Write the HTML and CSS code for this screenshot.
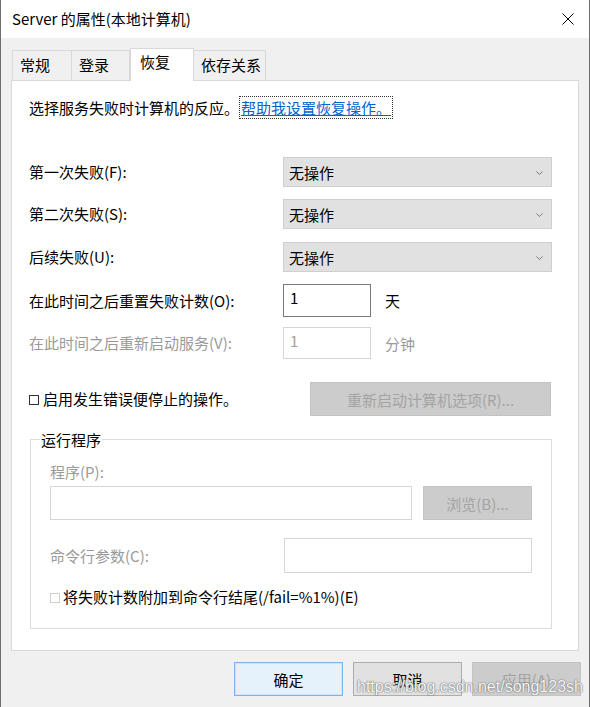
FILE: index.html
```html
<!DOCTYPE html>
<html lang="zh-CN">
<head>
<meta charset="utf-8">
<title>Server 的属性(本地计算机)</title>
<link rel="stylesheet" href="styles.css">
</head>
<body>
<div class="window">
  <div class="titlebar">
    <span class="title">Server 的属性(本地计算机)</span>
    <svg class="close" width="12" height="12" viewBox="0 0 12 12"><path d="M0.5 0.5 L11.5 11.5 M11.5 0.5 L0.5 11.5" stroke="#000" stroke-width="1" fill="none"/></svg>
  </div>
  <div class="client">
    <div class="tabs">
      <div class="tab t1">常规</div>
      <div class="tab t2">登录</div>
      <div class="tab active t3">恢复</div>
      <div class="tab t4">依存关系</div>
    </div>
    <div class="panel">
      <div class="intro">选择服务失败时计算机的反应。<a class="link">帮助我设置恢复操作。</a></div>

      <div class="row r1">
        <span class="label">第一次失败(F):</span>
        <div class="select"><span>无操作</span><svg class="chev" width="7" height="4" viewBox="0 0 7 4"><path d="M0.5 0.5 L3.5 3.5 L6.5 0.5" stroke="#777" stroke-width="1" fill="none"/></svg></div>
      </div>
      <div class="row r2">
        <span class="label">第二次失败(S):</span>
        <div class="select"><span>无操作</span><svg class="chev" width="7" height="4" viewBox="0 0 7 4"><path d="M0.5 0.5 L3.5 3.5 L6.5 0.5" stroke="#777" stroke-width="1" fill="none"/></svg></div>
      </div>
      <div class="row r3">
        <span class="label">后续失败(U):</span>
        <div class="select"><span>无操作</span><svg class="chev" width="7" height="4" viewBox="0 0 7 4"><path d="M0.5 0.5 L3.5 3.5 L6.5 0.5" stroke="#777" stroke-width="1" fill="none"/></svg></div>
      </div>
      <div class="row r4">
        <span class="label">在此时间之后重置失败计数(O):</span>
        <div class="num">1</div>
        <span class="unit">天</span>
      </div>
      <div class="row r5 disabled">
        <span class="label">在此时间之后重新启动服务(V):</span>
        <div class="num off">1</div>
        <span class="unit">分钟</span>
      </div>

      <div class="row r6">
        <span class="check"><span class="box"></span>启用发生错误便停止的操作。</span>
        <div class="btn dis wide">重新启动计算机选项(R)...</div>
      </div>

      <div class="group">
        <div class="legend">运行程序</div>
        <div class="glabel">程序(P):</div>
        <div class="prow">
          <div class="field prog"></div>
          <div class="btn dis browse">浏览(B)...</div>
        </div>
        <div class="crow">
          <span class="glabel2">命令行参数(C):</span>
          <div class="field args"></div>
        </div>
        <div class="gcheck"><span class="box off"></span>将失败计数附加到命令行结尾(/fail=%1%)(E)</div>
      </div>
    </div>
    <div class="buttons">
      <div class="btn ok">确定</div>
      <div class="btn cancel">取消</div>
      <div class="btn dis apply">应用(A)</div>
    </div>
    <div class="watermark">https://blog.csdn.net/song123sh</div>
  </div>
</div>
</body>
</html>
```

FILE: styles.css
```css
* { box-sizing: border-box; }
html, body { margin: 0; padding: 0; }
body {
  width: 590px;
  height: 707px;
  overflow: hidden;
  background: #f0f0f0;
  font-family: "Noto Sans CJK SC", "Noto Sans", sans-serif;
  font-size: 15px;
  color: #000;
}
.window {
  width: 590px;
  height: 707px;
  border-left: 1px solid #6e6e6e;
  border-right: 1px solid #6e6e6e;
  display: flex;
  flex-direction: column;
}
.titlebar {
  height: 38px;
  background: #fff;
  display: flex;
  align-items: center;
  padding-left: 11px;
  padding-right: 15px;
  flex: none;
}
.title { flex: 1; line-height: 20px; margin-top: -1px; }
.client {
  flex: 1;
  position: relative;
  background: #f0f0f0;
  padding-left: 10px;
}
.tabs {
  display: flex;
  align-items: flex-end;
  height: 42px;
  padding-left: 1px;
  position: relative;
  z-index: 2;
}
.tab {
  height: 30px;
  background: #f0f0f0;
  border: 1px solid #d9d9d9;
  border-bottom: none;
  line-height: 28px;
  padding-left: 7px;
}
.t1 { width: 60px; }
.t2 { width: 58px; border-left: none; }
.t3 { width: 64px; }
.t4 { width: 72px; border-left: none; }
.tab.active {
  height: 33px;
  background: #fff;
  line-height: 26px;
  padding-left: 9px;
  margin-bottom: -1px;
}
.panel {
  width: 568px;
  height: 571px;
  background: #fff;
  border: 1px solid #d9d9d9;
  padding-left: 17px;
  padding-top: 17px;
}
.intro { height: 20px; line-height: 20px; }
.link {
  color: #0066cc;
  text-decoration: underline;
  outline: 1px dotted #333;
  outline-offset: 0;
  padding: 0 1px;
  margin-left: 1px;
}
.row { display: flex; align-items: center; }
.label { width: 254px; flex: none; line-height: 20px; }
.r1 { margin-top: 39px; height: 30px; }
.r2 { margin-top: 12px; height: 30px; }
.r3 { margin-top: 13px; height: 30px; }
.r4 { margin-top: 12px; height: 33px; }
.r5 { margin-top: 10px; height: 32px; }
.r6 { margin-top: 23px; height: 34px; justify-content: space-between; width: 522px; }
.select {
  width: 269px;
  height: 30px;
  background: #e1e1e1;
  border: 1px solid #cfcfcf;
  display: flex;
  align-items: center;
  justify-content: space-between;
  padding-left: 5px;
  padding-right: 8px;
}
.chev { margin-top: 1px; }
.num {
  width: 88px;
  height: 100%;
  border: 1px solid #7a7a7a;
  padding-left: 6px;
  line-height: 26px;
  background: #fff;
}
.num.off { border-color: #d6d6d6; color: #a0a0a0; }
.unit { margin-left: 14px; }
.disabled .label, .disabled .unit { color: #9a9a9a; }
.check { display: flex; align-items: center; line-height: 20px; }
.box {
  display: inline-block;
  width: 10px;
  height: 10px;
  border: 1px solid #333;
  margin-right: 4px;
  margin-top: 1px;
}
.box.off { border-color: #d0d0d0; margin-right: 3px; }
.btn {
  height: 34px;
  display: flex;
  align-items: center;
  justify-content: center;
  border: 1px solid #adadad;
  background: #e1e1e1;
}
.btn.dis { background: #cccccc; border-color: #c4c4c4; color: #a3a3a3; }
.wide { width: 241px; }
.group {
  margin-top: 23px;
  margin-left: 1px;
  width: 522px;
  height: 190px;
  border: 1px solid #dcdcdc;
  padding-left: 19px;
}
.legend {
  display: block;
  width: max-content;
  background: #fff;
  line-height: 20px;
  height: 20px;
  margin-top: -10px;
  margin-left: -10px;
  padding: 0 1px;
}
.glabel { margin-top: 12px; line-height: 20px; color: #9a9a9a; }
.prow { display: flex; margin-top: 4px; height: 34px; }
.field { height: 100%; border: 1px solid #d6d6d6; background: #fff; }
.prog { width: 362px; }
.browse { width: 109px; margin-left: 11px; }
.crow { display: flex; align-items: center; margin-top: 18px; height: 35px; }
.glabel2 { width: 234px; flex: none; color: #9a9a9a; line-height: 20px; }
.args { width: 248px; }
.gcheck { display: flex; align-items: center; margin-top: 14px; line-height: 20px; }
.buttons {
  display: flex;
  justify-content: flex-end;
  gap: 10px;
  margin-top: 11px;
  padding-right: 8px;
}
.buttons .btn { width: 109px; }
.ok { background: #e5f1fb; border: 1px solid #7fb4ea; box-shadow: inset 0 0 0 1px #cfe3f7; }
.apply { border-color: #c4c4c4; }
.watermark {
  position: absolute;
  left: 356px;
  top: 639px;
  font-family: "Liberation Sans", Arial, sans-serif;
  font-size: 16px;
  line-height: 20px;
  color: rgba(255,255,255,0.95);
  text-shadow: 0 0 1px #777, 0 0 1px #777, 0 0 2px #999;
}
```
